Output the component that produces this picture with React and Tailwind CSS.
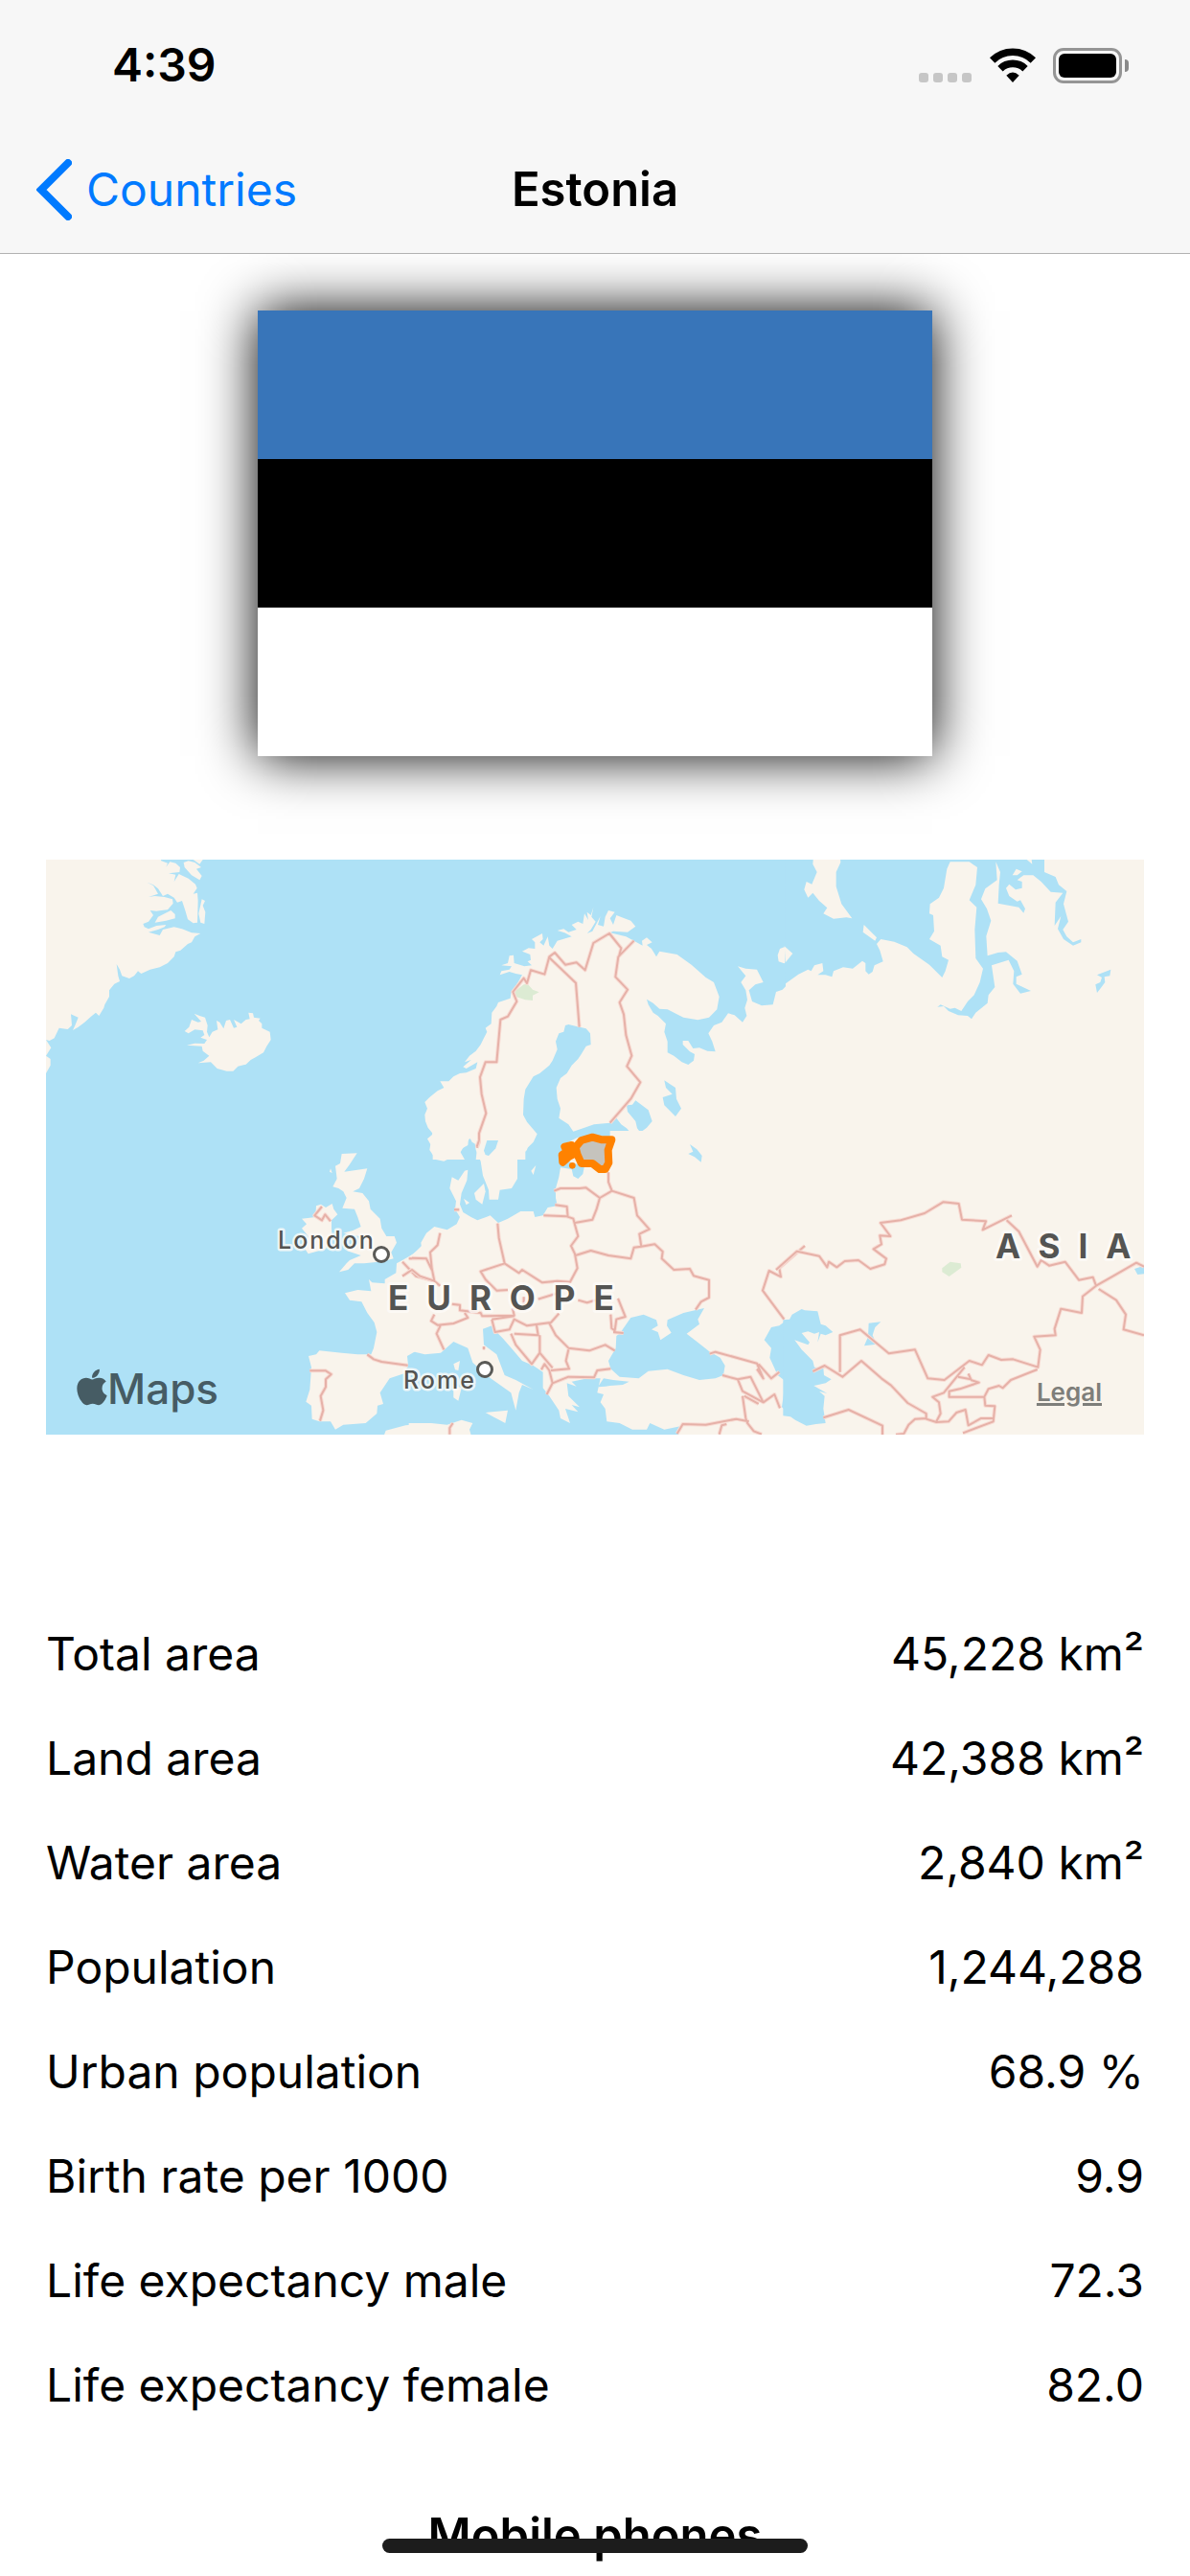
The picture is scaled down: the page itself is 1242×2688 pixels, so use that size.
import { FaApple } from 'react-icons/fa';

const FACTS = [
  { label: 'Total area', value: '45,228 km²' },
  { label: 'Land area', value: '42,388 km²' },
  { label: 'Water area', value: '2,840 km²' },
  { label: 'Population', value: '1,244,288' },
  { label: 'Urban population', value: '68.9 %' },
  { label: 'Birth rate per 1000', value: '9.9' },
  { label: 'Life expectancy male', value: '72.3' },
  { label: 'Life expectancy female', value: '82.0' },
];

// The map is stored as tiles. Each tile has its own origin, in thirds of a map unit.
const TILES = [
  {
    id: 'greenland',
    origin: 'translate(-24 -21)',
    land: [
      'M0 0H375L385 25 405 32 400 44 412 28 430 32 444 45 442 60 408 64 430 68 425 90 440 66 470 80 492 98 497 110 485 128 498 125 500 150 498 218 485 220 468 208 460 180 450 150 435 155 425 140 405 128 390 135 375 112 360 100 340 92 360 102 375 128 345 138 365 135 395 138 420 145 422 158 405 178 385 180 370 182 350 180 360 195 345 215 328 222 332 232 345 238 370 228 400 225 395 232 375 240 345 248 380 258 390 240 425 232 450 238 480 250 508 252 490 262 480 280 468 285 445 305 430 310 425 325 405 345 380 358 350 365 322 378 312 370 300 385 285 393 262 385 255 365 245 348 250 385 255 402 238 410 222 430 222 450 208 475 205 485 190 510 180 500 165 512 145 530 125 545 108 555 115 540 125 515 102 505 105 540 92 552 65 548 50 580 35 588 24 585 40 610 24 635 38 645 38 665 24 690H0Z',
      'M455 30 470 25 490 30 510 45 495 50 512 72 505 85 480 70 458 45Z',
      'M485 21H515L505 35Z',
      'M365 218 375 200 415 180 428 192 428 205 400 212Z',
      'M512 145 522 150 515 165 523 185 520 222 508 218 502 190Z',
      'M488 503 505 510 522 515 530 540 528 560 535 577 545 560 562 553 558 525 568 530 580 550 588 525 600 522 612 548 622 545 612 522 635 535 650 522 662 520 658 500 672 502 675 515 695 518 690 525 700 535 700 548 725 560 728 585 715 605 705 625 680 640 665 648 650 662 625 668 610 683 590 683 560 675 540 655 500 658 518 650 535 635 515 620 512 605 465 602 490 596 520 597 528 585 508 578 520 570 515 556 490 553 470 565 458 558 472 545 480 522 500 530 510 528Z',
    ],
  },
  {
    id: 'nordic',
    origin: 'translate(1146 -21)',
    land: [
      'M65 960V925L48 895 66 880 50 860 42 840 40 820 48 800 40 780 55 765 80 745 100 735 88 715 115 715 130 700 150 690 170 688 200 675 205 655 170 675 160 670 185 648 165 655 180 635 200 620 215 600 225 580 235 560 230 548 248 535 250 500 265 480 270 468 308 455 310 440 320 425 335 400 345 382 325 378 305 372 275 382 280 370 305 365 312 355 280 352 300 345 305 322 318 320 320 345 352 355 375 352 362 340 372 335 370 318 345 308 365 298 385 300 385 280 375 270 408 252 410 270 400 280 412 290 425 262 430 290 440 300 455 275 480 268 500 262 478 250 455 243 475 238 490 248 515 240 500 225 520 215 535 222 540 190 552 210 548 185 560 195 568 170 562 200 575 215 560 240 548 252 565 245 590 198 582 225 600 230 605 200 615 180 635 185 620 205 630 225 640 195 665 205 685 212 700 230 675 248 630 245 620 250 670 262 695 275 722 290 720 275 735 265 752 280 735 288 750 300 765 325 775 308 830 318 875 350 920 390 945 405 962 450 955 490 930 515 895 523 850 515 800 490 775 488 755 470 735 458 740 475 755 500 770 510 795 535 790 560 800 590 800 625 820 635 845 655 865 663 882 650 885 630 870 622 848 600 848 588 865 588 880 612 900 610 925 620 950 622 940 590 928 565 945 540 970 530 990 502 1010 508 1035 530 1048 510 1042 485 1050 460 1045 430 1030 405 1045 385 1020 355 1045 362 1080 365 1100 405 1075 412 1055 430 1065 465 1095 478 1130 475 1140 435 1160 428 1170 418 1200 385V960H620V890L650 882 685 877 672 862 655 850 640 830 620 845 570 850 540 860 505 872 490 850 460 830 465 800 455 770 452 735 465 705 485 690 500 665 520 645 530 630 545 605 560 600 558 565 545 550 525 545 490 537 480 540 475 560 460 565 450 590 455 615 440 650 430 665 400 690 380 700 355 740 350 770 348 820 360 842 392 880 380 905 355 930V960Z',
      'M1145 320 1152 300 1165 295 1190 315 1175 340 1165 346 1148 340Z',
    ],
    sea: [
      'M672 790 690 788 700 775 740 805 752 840 735 860 715 875 705 862 700 840 675 810Z',
      'M790 712 825 735 828 770 843 800 825 825 805 805 790 790 785 765 815 755 795 735Z',
      'M165 960 148 930 175 915 178 885 188 905 205 915 200 960Z',
      'M225 940 230 910 255 898 270 910 262 945Z',
      'M868 930 878 912 890 930Z',
    ],
    park: ['M320 435 350 412 362 410 378 428 398 436 378 446 378 462 355 460 325 450Z'],
  },
  {
    id: 'siberia',
    origin: 'translate(2316 -21)',
    land: ['M0 380H1122V960H0Z', 'M0 0H1122V600H0Z'],
    sea: [
      'M-2 0H810V60L845 75 855 100 880 120 870 160 885 215 868 240 880 262 900 280 925 270V280L900 290 870 270 852 238 862 198 842 228 845 155 868 125 830 122 800 90 775 70 745 70 725 85 740 90 740 110 720 115 700 98 690 110 700 135 725 152 735 148 750 175 745 188 730 170 665 158 668 100 672 60 658 28 662 85 625 112 612 145 630 175 643 212 628 260 632 322 665 312 690 310 725 338 740 380 722 388 722 410 768 432 735 440 712 410 715 370 698 335 645 352 655 420 635 445 632 470 595 500 582 520 570 510 540 508 510 495 495 480 475 482 485 475 515 488 530 485 550 495 570 465 590 445 608 405 618 362 595 330 592 240 598 170 575 148 595 100 600 45 575 28 515 28 505 50 495 110 480 140 452 160 450 190 462 195 465 245 450 270 485 290 490 325 510 335 500 370 490 390 450 350 400 315 380 295 340 278 298 270 285 285 295 305 305 340 278 352 272 372 260 380 250 370 250 345 240 338 210 362 180 358 150 370 145 388 125 382 100 382 118 370 115 345 90 352 80 370 70 365 40 380-2 410Z',
      'M970 412 985 405 990 390 975 382 1018 365 1015 385 998 388 1000 405 985 425 975 438Z',
    ],
    islands: [
      'M88 0H170L172 30 158 60 158 105 175 160 208 205 190 202 150 206 118 190 130 172 105 150 85 125 70 140 58 115 65 90 82 98 98 60 85 35Z',
      'M245 225 285 265 280 275 242 248Z',
      'M-4 292 22 315 0 342Z',
      'M710 70 722 50 740 58 725 70Z',
      'M755 21 772 35 770 21Z',
    ],
  },
  {
    id: 'atlantic',
    origin: 'translate(-24 879)',
    land: [
      'M950 42 998 40 975 75 958 98 1030 88 1020 120 1005 150 985 160 1015 165 1035 190 1040 215 1070 245 1075 275 1090 300 1115 300 1122 320 1105 350 1112 370 1080 378 1050 382 1020 385 990 385 970 405 942 412 965 385 975 375 1010 360 965 345 1000 325 1005 300 955 290 985 282 1010 270 1000 240 990 215 952 212 965 180 955 160 940 150 922 145 935 120 930 80 945 72Z',
      'M870 205 885 200 900 210 920 198 925 215 937 232 918 250 918 275 920 300 900 340 845 355 835 340 845 300 825 275 840 262 825 245 868 240Z',
      'M915 88 920 102 912 98Z',
      'M1230 310 1200 330 1175 355 1140 375 1122 385 1120 415 1085 435 1085 448 1045 445 1035 435 1042 472 1000 468 960 478 975 500 1012 505 1030 540 1052 570 1060 600 1050 650 1042 670 1000 670 950 665 880 658 870 670 846 675 855 710 850 780 838 818 855 830 857 872 880 880 915 880 930 905 955 890 1025 885 1060 855 1062 830 1080 825 1070 790 1100 745 1145 730 1158 705 1155 675 1185 658 1230 665Z',
      'M1080 930 1088 908 1150 892 1230 885V930Z',
    ],
  },
  {
    id: 'europe',
    origin: 'translate(1146 879)',
    land: [
      'M65-30 55 30 75 60 100 65 150 40 165 15 180-5H195L200 30 215 65 222 110 240 155 242 185 270 185 275 155 312 150 330 120 330 60 360 30 375-30Z',
      'M-10 365 30 335 28 320 45 290 70 270 110 280 140 262 150 240 135 215 138 190 118 150 125 115 145 125 165 95 175 92 172 125 155 165 150 200 160 225 185 240 205 250 245 235 270 258 300 245 340 222 380 222 385 240 410 235 425 210 455 205 450 180 450 150 460 115 465 85 500 90 505 112 520 120 535 105 540 80 500 70 460 50 480 10 520-10 620-10 620-30H1230V940H830L840 895 790 905 745 885 735 905 690 905 650 885 610 880 605 840 590 820 600 795 580 790 590 745H560L550 745 500 755 515 770 485 760 490 800 525 835 500 828 520 850 480 840 495 885 465 870 460 845 430 800 410 775 410 725 380 705 345 690 315 655 285 620 265 600 250 580 222 590 225 640 265 670 290 735 325 750 380 780 345 765 335 790 325 845 318 820 310 790 240 740 190 695 175 650 130 630 90 665 40 670-10 658Z',
      'M195 165 225 135 230 160 220 200 200 185Z',
      'M162 182 180 195 170 202Z',
      'M373 95 388 78 380 108Z',
      'M230 852 300 845 292 885Z',
      'M130 700 150 690 145 720 135 718Z',
      'M130 765 155 775 145 815 130 805Z',
      'M-10 885 60 885 110 890 155 875 190 885 180 905 190 940H-10Z',
    ],
    sea: [
      'M225 32 235 0H270L262 25 240 48 230 45Z',
      'M640 612 650 605 685 555 725 545 765 562 770 580 750 592 770 600 778 625 812 602 798 580 800 562 850 540 915 525 895 560 900 575 860 605 895 632 930 660 965 680 980 705 975 735 950 745 900 750 850 735 800 716 740 722 710 745 650 740 622 715 615 690 638 650Z',
      'M582 772 600 745 630 750 680 755 660 765 620 768 605 770Z',
      'M1230 530 1200 545 1170 565 1150 580 1125 585 1103 625 1125 650 1120 680 1145 735 1188 768 1165 785 1158 835 1200 870 1230 880Z',
      'M865 42 880 35 870 12 892 28 908 48 905 68 885 52Z',
    ],
  },
  {
    id: 'asia',
    origin: 'translate(2316 879)',
    land: ['M32-20H1122V930H-4V-20Z'],
    sea: [
      'M-8 562 12 560 20 545 50 528 60 532 100 535 110 575 125 580 148 600 125 610 110 605 100 632 105 600 90 605 70 598 50 603 75 632 70 640 28 625 50 655 85 690 90 710 118 712 120 735 143 748 125 760 88 768 130 792 105 785 122 800 118 840 125 885 95 888 65 893 30 875 15 865-8 862Z',
      'M260 572 298 568 280 585 272 610 285 638 246 643 258 615Z',
      'M1092 402 1122 392V418L1102 420Z',
    ],
    park: ['M490 400 515 380 548 385 550 398 512 426 490 412Z'],
  },
];

const BORDERS = [
  {
    id: 'nordic',
    origin: 'translate(1146 -21)',
    d: 'M203 923 210 905V878L232 815 218 755 213 702 230 655H265L277 522 300 512 328 465 316 435 350 392 360 408 372 367 415 380 430 325 447 312 480 350 515 343 542 367 568 282 618 252 655 298 648 325M430 328 513 407 524 545M695 275 646 325 637 388 675 428 650 468 663 505 670 570 688 635 673 668 715 718 685 770 620 845',
  },
  {
    id: 'west',
    origin: 'translate(-24 879)',
    d: 'M888 207 865 235 888 250 898 232 915 253M850 721H900L917 732 900 748V772L884 800 892 845 882 878M1030 670 1050 685 1075 693 1157 704M1140 380 1182 425 1240 440M1160 370 1215 370',
  },
  {
    id: 'europe',
    origin: 'translate(1146 879)',
    d: 'M132 217H148M203 20 210 0M88 290 80 328 57 350 62 400 70 440 88 455M0 368 45 370 62 405M-30 425 0 405 25 425 70 440M268 260 272 305 290 385 215 410 230 435 265 470 300 468M290 385 335 415 345 405 408 445 455 440 495 443 518 400 510 355 498 330 520 300 505 245 485 238 412 235M448 202 485 207 488 240M445 158 465 150H525L545 148 588 180 578 215 565 248 510 258M588 180 626 158 615 130 615 100M626 158 695 180 705 235 743 278 712 293 718 332 695 335 685 370 615 360 560 345 512 360M718 332 760 325 785 348 782 370 820 405 870 402 882 424 930 437V492L905 505 888 530M395 497 450 480M520 500 548 508 575 500M645 495 668 552 640 560 635 595 625 588 622 545M630 600 662 603M125 512 150 515 150 532 215 540 220 550 320 548 315 525M70 545 60 565 80 578 130 573 175 555 165 540M90 578 77 605 100 655M250 560 260 600 305 592 320 560 360 580 435 570 460 542M250 560 320 550M430 572 450 610 490 650 555 658 605 640 635 658M390 578 395 610 320 605M310 605 325 640 375 700 400 665V610M400 665 440 712M405 718 415 700 430 720 440 760 422 795M440 760 490 740 570 742 580 720 622 715M490 655 482 690 492 715 435 720M350 490V515M225 645V655M932 668 950 662 1080 698 1100 745 1080 715M972 735 1020 748 1060 740 1100 820 1035 785 1020 748M1085 700 1125 745 1150 725M1100 820 1135 795 1152 838M1040 800 1085 825M1035 800 1045 870 1050 885 1070 910 1095 920M830 918 848 888 920 890 1015 872 1055 880M962 920 970 892 985 888M118 920V900L128 885M1230 330 1150 400 1155 427 1118 408 1098 470 1165 560',
  },
  {
    id: 'asia',
    origin: 'translate(2316 879)',
    d: 'M-30 405 35 347 105 362 130 397 135 380 160 397 185 378 228 375 265 402 310 388 315 370 275 340 300 325 295 298 328 300 297 258 360 250 435 228 493 193 542 198 552 248 627 253 617 280 708 235M692 250 730 285 788 395 800 375 825 392 875 380 918 437 962 428 972 455 930 488 927 540 862 527 842 590 845 610 778 614 797 655 790 710 712 685 675 687 635 672 615 703 575 690 497 750 445 745 405 655 323 667 233 592 170 610V725M972 455 1025 425 1098 383 1122 395M980 465 1035 500 1065 545 1058 592 1122 610M85 723 122 705 178 740 237 690 300 745 330 767 382 822 440 855V870L405 872 385 890 370 918 345 921M118 868 197 843 303 893V921M440 872 472 882 510 880 535 852 563 843 572 892 612 870 650 870M472 880 485 855 480 820 460 803 495 790 560 710M540 740 580 748 572 730M580 750 605 758 545 778 512 785V803H622L635 778 668 768 680 775 705 750 788 717M622 803 625 830 655 832 650 880 555 916',
  },
];

function StatusBar() {
  return (
    <div className="flex items-end justify-between pt-[40px] pr-[64px] pl-[117px]">
      <time className="text-[48px] leading-[56px] font-semibold">4:39</time>
      <div className="flex h-[46px] items-start">
        <div className="mr-[19px] flex gap-[5px] pt-[26px]">
          {[0, 1, 2, 3].map(i => (
            <span key={i} className="size-[10px] rounded-[3px] bg-[#c6c6c6]" />
          ))}
        </div>
        <svg viewBox="304 57 144 108" className="mr-[18px] h-[36px] w-[48px]" aria-label="Wi-Fi">
          <path d="M312 96a91 91 0 0 1 128 0M337 122a56 56 0 0 1 78 0" fill="none" stroke="#000" strokeWidth="23" />
          <path d="M356 143Q376 124 396 143L376 165Z" />
        </svg>
        <div className="flex items-center">
          <div className="h-[37px] w-[72px] rounded-[11px] border-3 border-[#959595] p-[3px]">
            <div className="h-full rounded-[6px] bg-black" />
          </div>
          <span className="ml-[3px] h-[13px] w-[4px] rounded-r-full bg-[#8a8a8a]" />
        </div>
      </div>
    </div>
  );
}

function NavBar() {
  return (
    <nav className="grid grid-cols-3 items-center px-[38px] pt-[62px] pb-[26px] leading-[80px]">
      <a href="#countries" className="flex items-center gap-[15px] text-[48px] text-[#007aff]">
        <svg viewBox="0 0 37 64" className="h-[64px] w-[37px]" aria-hidden="true">
          <path d="M33 4 5 32l28 28" fill="none" stroke="currentColor" strokeWidth="8" strokeLinecap="round" />
        </svg>
        Countries
      </a>
      <h1 className="text-center text-[49px] font-semibold">Estonia</h1>
    </nav>
  );
}

function Flag() {
  return (
    <div
      role="img" aria-label="Flag of Estonia"
      className="mx-auto flex aspect-[704/465] w-[704px] max-w-full flex-col shadow-[0_0_54px_#000]"
    >
      <div className="flex-1 bg-[#3875b9]" />
      <div className="flex-1 bg-black" />
      <div className="flex-1 bg-white" />
    </div>
  );
}

function CityDot({ x, y }) {
  return <circle cx={x} cy={y} r="7.5" fill="#fff" stroke="#5a5a57" strokeWidth="3" />;
}

function CountryMap() {
  return (
    <div className="relative">
      <svg viewBox="0 0 1146 600" className="block w-full bg-[#aee1f6]" aria-label="Map of Europe">
        <g transform="scale(0.33333)">
          {TILES.map(tile => (
            <g key={tile.id} transform={tile.origin}>
              <g fill="#f9f4ec">{tile.land.map(d => <path key={d} d={d} />)}</g>
              <g fill="#aee1f6">{tile.sea?.map(d => <path key={d} d={d} />)}</g>
              <g fill="#f9f4ec">{tile.islands?.map(d => <path key={d} d={d} />)}</g>
              <g fill="#dcebd3">{tile.park?.map(d => <path key={d} d={d} />)}</g>
            </g>
          ))}
          {BORDERS.map(b => (
            <g key={b.id} transform={b.origin} fill="none" strokeLinejoin="round">
              <path d={b.d} stroke="#f8dcd4" strokeWidth="12" />
              <path d={b.d} stroke="#e6b1a8" strokeWidth="6" />
            </g>
          ))}
          {/* Selected country */}
          <g transform="translate(1146 879)" stroke="#ff8200" strokeWidth="24" strokeLinejoin="round">
            <path d="M512 22 530 0 565-10 595-2 625-2 614 30 616 70 605 90 588 90 565 72 530 72 518 45Z" fill="#c5c3bd" />
            <path d="M478 20 500 15 512 40 490 52 472 68 470 45 485 35Z" fill="#ff8200" />
            <circle cx="502" cy="79" r="10" fill="#ff8200" stroke="none" />
          </g>
        </g>
        <g fill="#545452" stroke="#fdfbf8" strokeOpacity="0.8" paintOrder="stroke" strokeLinejoin="round">
          <g className="text-[25px] font-medium tracking-[2px]" strokeWidth="5">
            <text x="242" y="406">London</text>
            <text x="373" y="552">Rome</text>
          </g>
          <g className="text-[35px] font-bold tracking-[19px]" strokeWidth="6">
            <text x="357" y="470">EUROPE</text>
            <text x="991" y="416">ASI<tspan className="tracking-normal">A</tspan></text>
          </g>
        </g>
        <CityDot x={350} y={412} />
        <CityDot x={458} y={532} />
      </svg>
      <div className="absolute bottom-[20px] left-[32px] flex items-center text-[44px] leading-[56px] font-medium text-[#465c64]">
        <FaApple className="mb-[4px] h-[43px] w-[32px]" aria-hidden="true" />
        Maps
      </div>
      <a
        href="#legal"
        className="absolute right-[44px] bottom-[28px] text-[26px] leading-[32px] font-semibold text-[#7e7e7a] underline decoration-3 underline-offset-2"
      >
        Legal
      </a>
    </div>
  );
}

export default function App() {
  return (
    <div className="bg-white font-['Inter','Liberation_Sans',sans-serif] text-black">
      <header className="relative border-b border-[#b2b2b2] bg-[#f7f7f7]">
        <StatusBar />
        <NavBar />
      </header>

      <main className="px-[48px] pt-[59px]">
        <Flag />
        <div className="mt-[108px]">
          <CountryMap />
        </div>

        <table className="mt-[174px] w-full text-[48px] leading-[61px]">
          <tbody>
            {FACTS.map(fact => (
              <tr key={fact.label} className="h-[109px]">
                <th scope="row" className="text-left font-normal">{fact.label}</th>
                <td className="text-right">{fact.value}</td>
              </tr>
            ))}
          </tbody>
        </table>

        <h2 className="mt-[72px] text-center text-[49px] leading-[61px] font-semibold">Mobile phones</h2>
      </main>

      {/* Home indicator */}
      <div className="fixed inset-x-0 bottom-[24px] mx-auto h-[15px] w-[444px] rounded-full bg-[#1c1c1c]" />
    </div>
  );
}
